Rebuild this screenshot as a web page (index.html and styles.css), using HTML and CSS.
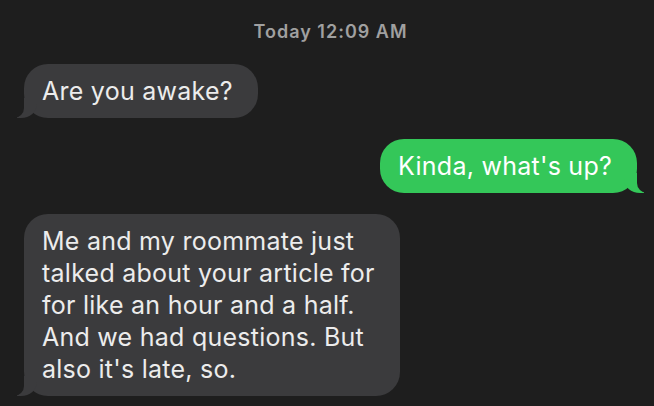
FILE: index.html
```html
<!DOCTYPE html>
<html lang="en">
<head>
<meta charset="utf-8">
<title>Messages</title>
<link rel="stylesheet" href="styles.css">
</head>
<body>
<main class="thread">
  <div class="timestamp"><span class="day">Today</span> 12:09 AM</div>
  <div class="row row-in">
    <div class="bubble in">Are you awake?</div>
  </div>
  <div class="row row-out">
    <div class="bubble out">Kinda, what's up?</div>
  </div>
  <div class="row row-in">
    <div class="bubble in">Me and my roommate just<br>talked about your article for<br>for like an hour and a half.<br>And we had questions. But<br>also it's late, so.</div>
  </div>
</main>
</body>
</html>
```

FILE: styles.css
```css
html, body {
  margin: 0;
  background: #1e1e1e;
}

body {
  font-family: Inter, "Noto Sans", "Liberation Sans", sans-serif;
  -webkit-font-smoothing: antialiased;
}

.thread {
  display: flex;
  flex-direction: column;
  gap: 21px;
  padding: 22px 17px 0 24px;
}

.timestamp {
  text-align: center;
  font-size: 18px;
  line-height: 20px;
  font-weight: 600;
  letter-spacing: 1px;
  color: #a0a0a0;
  margin-bottom: 1px;
}

.row {
  display: flex;
}

.row-in {
  justify-content: flex-start;
}

.row-out {
  justify-content: flex-end;
}

.bubble {
  position: relative;
  font-size: 25px;
  line-height: 32px;
  letter-spacing: 0.25px;
  padding: 11px 25px 11px 18px;
  border-radius: 24px;
  white-space: nowrap;
}

.bubble.in {
  background: #3b3b3d;
  color: #ececec;
}

.bubble.out {
  background: #34c759;
  color: #ffffff;
}

.bubble::before,
.bubble::after {
  content: "";
  position: absolute;
  bottom: 0;
  height: 20px;
}

.bubble.in::before {
  left: -7px;
  width: 20px;
  background: #3b3b3d;
  border-bottom-right-radius: 16px 14px;
}

.bubble.in::after {
  left: -10px;
  width: 10px;
  background: #1e1e1e;
  border-bottom-right-radius: 10px;
}

.bubble.out::before {
  right: -7px;
  width: 20px;
  background: #34c759;
  border-bottom-left-radius: 16px 14px;
}

.bubble.out::after {
  right: -10px;
  width: 10px;
  background: #1e1e1e;
  border-bottom-left-radius: 10px;
}
```
